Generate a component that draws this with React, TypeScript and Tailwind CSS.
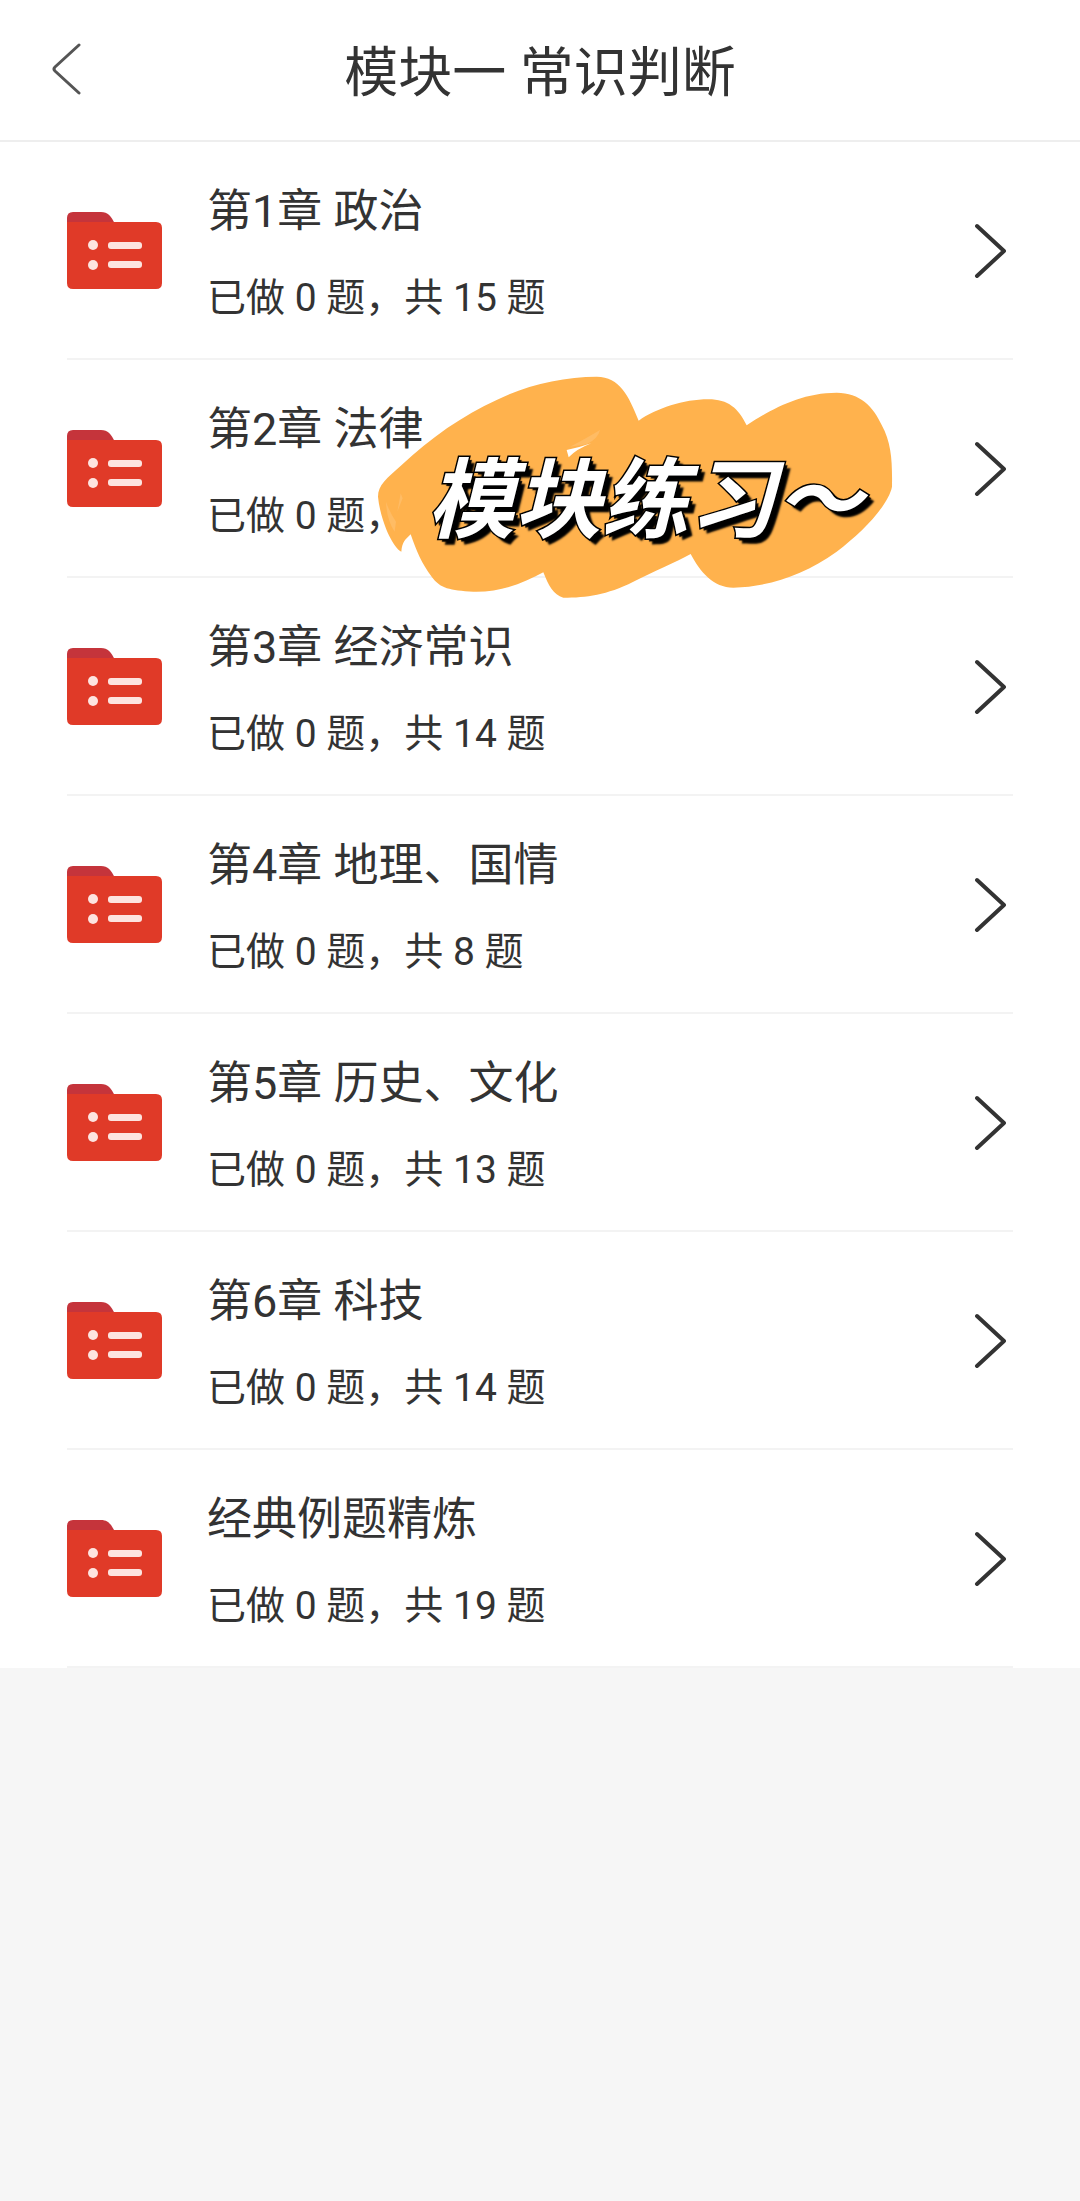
interface Chapter {
  title: string;
  done: number;
  total?: number;
  sticker?: string;
}

const chapters: Chapter[] = [
  { title: "第1章 政治", done: 0, total: 15 },
  { title: "第2章 法律", done: 0, sticker: "模块练习～" },
  { title: "第3章 经济常识", done: 0, total: 14 },
  { title: "第4章 地理、国情", done: 0, total: 8 },
  { title: "第5章 历史、文化", done: 0, total: 13 },
  { title: "第6章 科技", done: 0, total: 14 },
  { title: "经典例题精炼", done: 0, total: 19 },
];

function FolderIcon() {
  return (
    <svg viewBox="0 0 95 77" className="w-[95px] h-[77px] shrink-0" aria-hidden="true">
      <path d="M0 20V6Q0 0 6 0H34C41 0 44 4 48 12V20Z" fill="#c5343b" />
      <path d="M0 10H89Q95 10 95 16V71Q95 77 89 77H6Q0 77 0 71Z" fill="#e03a28" />
      <g fill="#fde4e0">
        <circle cx="26" cy="33" r="5" />
        <circle cx="26" cy="53" r="5" />
        <rect x="41" y="30" width="34" height="7" rx="3" />
        <rect x="41" y="49" width="34" height="7" rx="3" />
      </g>
    </svg>
  );
}

function Sticker({ text }: { text: string }) {
  return (
    <div className="absolute left-[303px] top-[5px] z-10 flex h-[240px] w-[530px] items-center justify-center pt-8 pl-5">
      <svg viewBox="0 0 1590 720" className="absolute inset-0 h-full w-full" aria-hidden="true">
        <path
          fill="#ffb24d"
          d="M24 395C24 360 50 340 95 300C180 220 280 150 380 105C470 60 580 35 680 35C750 37 775 90 806 167C860 130 940 103 1015 103C1075 103 1105 130 1130 181C1200 135 1290 83 1400 83C1470 83 1510 125 1535 180C1565 235 1567 290 1566 365C1555 420 1480 500 1400 560C1300 630 1200 665 1090 668C1030 668 990 620 962 567C920 590 850 620 790 650C710 690 650 698 580 698C550 690 535 660 520 622C460 655 390 682 310 680C240 676 210 670 185 635C155 595 140 560 122 508C105 525 97 530 94 560C65 545 30 460 24 395Z"
        />
        <path
          fill="#ffc67c"
          opacity="0.5"
          d="M48 410Q58 440 78 470L74 500Q50 465 48 410ZM92 385L98 400L82 440ZM600 245Q640 225 690 195Q685 220 650 238Z"
        />
        <path fill="#fff" d="M590 255Q630 247 664 235Q620 252 596 277Z" />
      </svg>
      <span className="relative whitespace-nowrap text-[87px] leading-none font-bold italic text-white [-webkit-text-stroke:3px_#000] [paint-order:stroke_fill] [text-shadow:3px_3px_1px_#000,6px_6px_2px_#000]">
        {text}
      </span>
    </div>
  );
}

function ChapterRow({ title, done, total, sticker }: Chapter) {
  return (
    <li className="relative border-b-2 border-[#f3f3f3]">
      <button type="button" className="flex h-[216px] w-full items-center text-left">
        <FolderIcon />
        <span className="ml-[45px] flex flex-1 flex-col gap-[30px] pt-1.5">
          <span className="text-[45px] leading-[60px]">{title}</span>
          <span className="text-[39px] leading-[52px]">
            已做 {done} 题，{total !== undefined && `共 ${total} 题`}
          </span>
        </span>
        <svg viewBox="0 0 32 56" className="mr-[7px] h-14 w-8 shrink-0" aria-hidden="true">
          <path d="M3 4L30 29L3 54" fill="none" stroke="#333" strokeWidth="4" strokeLinecap="round" strokeLinejoin="round" />
        </svg>
      </button>
      {sticker && <Sticker text={sticker} />}
    </li>
  );
}

export default function App() {
  return (
    <div className="min-h-screen bg-[#f6f6f6] font-[Roboto,'Noto_Sans_CJK_SC',sans-serif] text-[#333]">
      <header className="flex h-[142px] items-center border-b-2 border-[#eee] bg-white">
        <button type="button" aria-label="返回" className="flex w-[132px] pl-[50px]">
          <svg viewBox="0 0 32 54" className="h-[54px] w-8" aria-hidden="true">
            <path d="M29 2L5 24Q3 26 5 28L29 50" fill="none" stroke="#555" strokeWidth="3" strokeLinecap="round" />
          </svg>
        </button>
        <h1 className="flex-1 pt-2 text-center text-[54px] leading-[72px]">模块一 常识判断</h1>
        <div className="w-[132px]" />
      </header>
      <ul className="bg-white px-[67px]">
        {chapters.map((chapter) => (
          <ChapterRow key={chapter.title} {...chapter} />
        ))}
      </ul>
    </div>
  );
}
